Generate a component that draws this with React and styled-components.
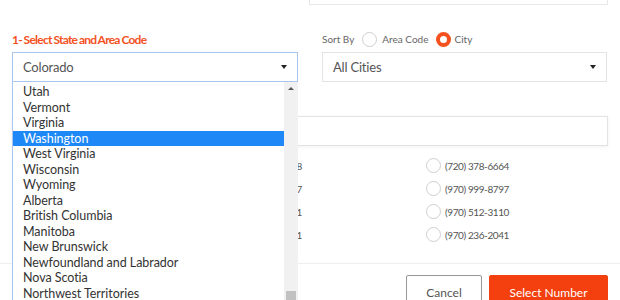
import React from 'react'
import styled, { createGlobalStyle } from 'styled-components'

const Global = createGlobalStyle`
html, body {
  margin: 0;
  background: #fff;
  overflow: hidden;
  font-family: Lato, "Open Sans", sans-serif;
}
`;

const states = [
  "Utah", "Vermont", "Virginia", "Washington", "West Virginia", "Wisconsin", "Wyoming",
  "Alberta", "British Columbia", "Manitoba", "New Brunswick", "Newfoundland and Labrador",
  "Nova Scotia", "Northwest Territories", "Nunavut"
];

const numbers = [
  ["(720) 378-6601", "(720) 378-6658", "(720) 378-6664"],
  ["(970) 999-8712", "(970) 999-8787", "(970) 999-8797"],
  ["(970) 512-3101", "(970) 512-3061", "(970) 512-3110"],
  ["(970) 236-2001", "(970) 236-2031", "(970) 236-2041"],
];

const Page = styled.div`
padding: 0 12px;
width: 596px;
`;

const TopStrip = styled.div`
margin-left: 297px;
height: 5px;
border: 1px solid #e8e8e8;
border-top: none;
box-sizing: border-box;
`;

const Columns = styled.div`
display: grid;
grid-template-columns: 286px 285px;
column-gap: 24px;
margin-top: 25px;
`;

const Label = styled.div`
height: 20px;
line-height: 20px;
margin-bottom: 2px;
font-size: 12px;
font-weight: 700;
letter-spacing: -0.75px;
word-spacing: -0.5px;
color: #f4511e;
`;

const SortRow = styled.div`
height: 20px;
padding-bottom: 2px;
box-sizing: border-box;
margin-bottom: 2px;
display: flex;
align-items: center;
font-size: 10px;
color: #666;
`;

const Radio = styled.span`
width: 15px;
height: 15px;
box-sizing: border-box;
border-radius: 50%;
border: ${(p) => (p.checked ? "4px solid #f4511e" : "1px solid #cfcfcf")};
background: #fff;
margin: 0 ${(p) => (p.after ?? 4)}px 0 ${(p) => p.gap || 0}px;
flex: none;
`;

const SelectWrap = styled.div`
position: relative;
`;

const Select = styled.div`
height: 30px;
box-sizing: border-box;
border: 1px solid ${(p) => (p.focused ? "#a9c7ef" : "#e3e3e3")};
padding: 0 10px;
display: flex;
align-items: center;
justify-content: space-between;
font-size: 13px;
letter-spacing: -0.2px;
color: #555;
`;

const Caret = styled.span`
width: 0;
height: 0;
border-left: 3.5px solid transparent;
border-right: 3.5px solid transparent;
border-top: 4px solid #222;
`;

const Dropdown = styled.div`
position: absolute;
top: 30px;
left: 0;
width: 286px;
height: 240px;
box-sizing: border-box;
border-left: 1px solid #a9c7ef;
background: #fff;
display: flex;
z-index: 5;
overflow: hidden;
`;

const List = styled.div`
flex: 1;
padding-top: 2px;
`;

const Item = styled.div`
height: 15.5px;
line-height: 15.5px;
padding-left: 10px;
font-size: 12.5px;
letter-spacing: -0.05px;
color: ${(p) => (p.active ? "#fff" : "#333")};
background: ${(p) => (p.active ? "#1e88f7" : "transparent")};
white-space: nowrap;
`;

const Scrollbar = styled.div`
width: 14px;
background: #f1f1f1;
display: flex;
flex-direction: column;
align-items: center;
`;

const UpArrow = styled.span`
margin-top: 5px;
width: 0;
height: 0;
border-left: 3px solid transparent;
border-right: 3px solid transparent;
border-bottom: 3px solid #555;
`;

const Thumb = styled.div`
margin-top: 201px;
width: 10px;
height: 30px;
background: #c1c1c1;
`;

const Search = styled.div`
margin-top: 34px;
height: 30px;
box-sizing: border-box;
border: 1px solid #e3e3e3;
box-shadow: 0 1px 4px rgba(0, 0, 0, 0.06);
`;

const Numbers = styled.div`
margin-top: 8px;
display: grid;
grid-template-columns: repeat(3, 207px);
grid-auto-rows: 23px;
`;

const NumberItem = styled.div`
display: flex;
align-items: center;
font-size: 10px;
letter-spacing: -0.4px;
color: #555;
`;

const Footer = styled.div`
margin: 17px -12px 0;
padding: 11px 12px 0;
border-top: 1px solid #eee;
display: flex;
justify-content: flex-end;
gap: 7px;
`;

const Button = styled.button`
width: ${(p) => (p.primary ? 119 : 76)}px;
height: 34px;
padding: 0;
font-family: Lato, sans-serif;
font-size: 12px;
border-radius: 2px;
border: 1px solid ${(p) => (p.primary ? "#f43f0e" : "#999")};
background: ${(p) => (p.primary ? "#f43f0e" : "#fff")};
color: ${(p) => (p.primary ? "#fff" : "#555")};
`;

export default function App() {
  return (
    <>
      <Global />
      <Page>
        <TopStrip />
        <Columns>
          <div>
            <Label>1- Select State and Area Code</Label>
            <SelectWrap>
              <Select focused>
                Colorado
                <Caret />
              </Select>
              <Dropdown>
                <List>
                  {states.map((s) => (
                    <Item key={s} active={s === "Washington"}>{s}</Item>
                  ))}
                </List>
                <Scrollbar>
                  <UpArrow />
                  <Thumb />
                </Scrollbar>
              </Dropdown>
            </SelectWrap>
          </div>
          <div>
            <SortRow>
              Sort By
              <Radio gap={8} after={5} />
              Area Code
              <Radio gap={7} after={4} checked />
              City
            </SortRow>
            <Select>
              All Cities
              <Caret />
            </Select>
          </div>
        </Columns>
        <Search />
        <Numbers>
          {numbers.flat().map((n) => (
            <NumberItem key={n}>
              <Radio />
              {n}
            </NumberItem>
          ))}
        </Numbers>
        <Footer>
          <Button>Cancel</Button>
          <Button primary>Select Number</Button>
        </Footer>
      </Page>
    </>
  )
}
